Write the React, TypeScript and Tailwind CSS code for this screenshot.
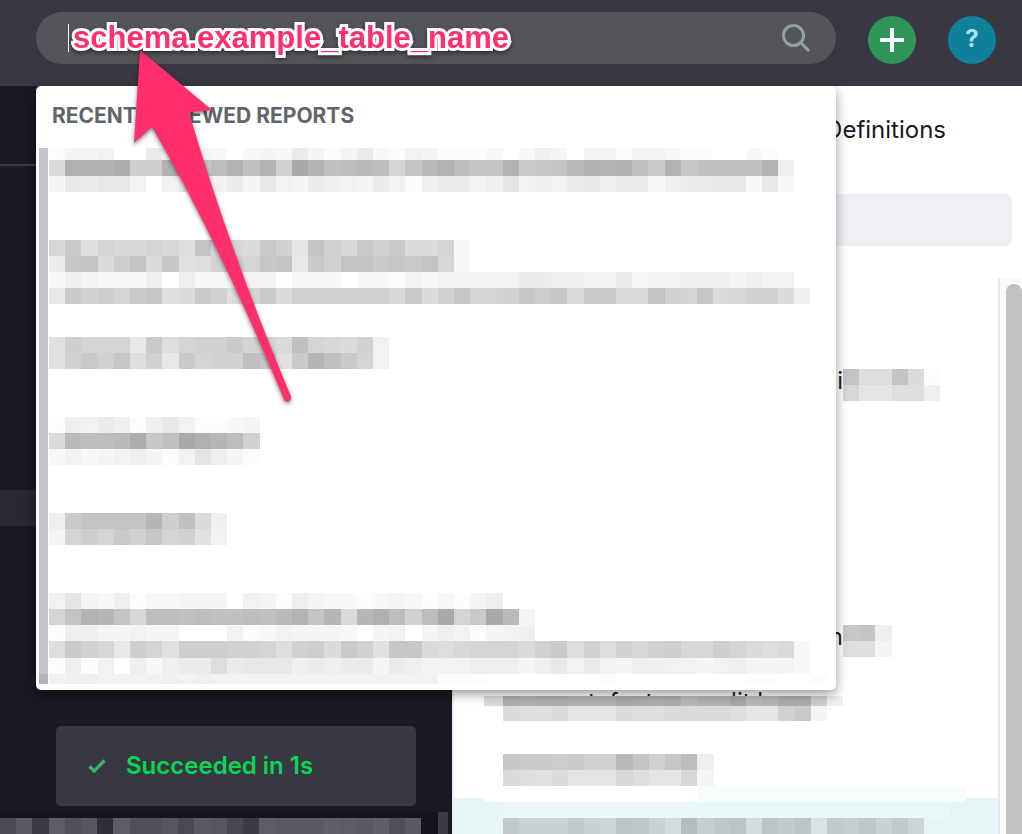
type Tone = "light" | "cyan" | "dark";
type MosaicRow = { y: number; h?: number; cells: string };

// one letter per cell, a = faintest ... z = strongest, "." = empty
const shade = (letter: string, tone: Tone) => {
  const level = letter.charCodeAt(0) - 96;
  if (tone === "dark") {
    const v = 24 + level * 3;
    return `rgb(${v}, ${v - 1}, ${v + 9})`;
  }
  const v = Math.round(255 - level * 3.3);
  if (tone === "cyan") {
    return `rgb(${v - 7}, ${v}, ${v + 1})`;
  }
  return level > 7 ? `rgb(${v}, ${v}, ${v + 2})` : `rgb(${v}, ${v}, ${v})`;
};

const Mosaic = ({ rows, left = 0, tone = "light" }: { rows: MosaicRow[]; left?: number; tone?: Tone }) => (
  <g shapeRendering="crispEdges">
    {rows.map((row) =>
      row.cells.split("").map((cell, i) => {
        if (cell === ".") return null;
        const x = left + Math.round((i * 81) / 5);
        const next = left + Math.round(((i + 1) * 81) / 5);
        return (
          <rect key={`${row.y}-${i}`} x={x} y={row.y} width={next - x} height={row.h ?? 16} fill={shade(cell, tone)} />
        );
      })
    )}
  </g>
);

const reportRows: MosaicRow[] = [
  { y: 0, h: 12, cells: "accd..fcdcb.bcbfcacfbadcaaab.bec.ddacdbaa..ba" },
  { y: 12, cells: "kxxxyoowxqtwswnzwstutmruwtrrwpqruxvxspwqsssswe" },
  { y: 28, cells: "cgfggd.dfedfcgdcfedcfdaeffdehdedfgeffbeffggbgb" },
  { y: 92, cells: "lpjmllmljrllkpnhrnlpnpkkmb" },
  { y: 108, cells: "fqrkorkqijmomqrgpnrrpqprlb" },
  { y: 124, cells: "becbbbe.ebbccc.bbb.bbacbdddddffeeddfbddeeecedd" },
  { y: 140, cells: "gpnompqjkpnjmpknnnnnnlpknqmmnqoqkppkkrnmqklnnke" },
  { y: 189, cells: "iommmgpjmnnpmmksmlknd" },
  { y: 205, cells: "inpnqjngpmnnsqipvspmd" },
  { y: 269, cells: "aedfeaegdaabc" },
  { y: 285, cells: "kuttuyqszxvtn" },
  { y: 301, cells: "bdbcdecadheca" },
  { y: 365, cells: "eprrrrvoske" },
  { y: 381, cells: "cmompnqmnid" },
  { y: 445, cells: "dhcbeabbccc.dcaecbbabcbabace" },
  { y: 461, cells: "mrwvrlttstsstsuwrvkvxtntzmpzuc" },
  { y: 477, cells: "aeeccdcc...da bdcccb.cd.cedacde".replace(" ", "") },
  { y: 493, h: 17, cells: "jpnlgomiooonnmjnokpniqqkjlmmmknpjnjnlnollomkjkb" },
  { y: 510, cells: "aead.ebeffjfgggefeffcfedddeeecegdfdceeddcdecccb" },
  { y: 526, h: 10, cells: "deeddddededdddddddddddddaaa.......a........aa..a" },
];

const statusRows: MosaicRow[] = [{ y: 6, cells: "qvlwsuhwssuqvuplwvvvxwvxsv" }];

const listRow1: MosaicRow[] = [
  { y: 0, cells: "rjjrka" },
  { y: 16, cells: "lhhjje" },
];
const listRow2: MosaicRow[] = [
  { y: 0, cells: "qre" },
  { y: 16, cells: "jjc" },
];
const listRow3: MosaicRow[] = [
  { y: 0, h: 10, cells: "xwxxwwwzyxyuwwzuvyyoe" },
  { y: 10, h: 15, cells: "kjjkhhhkjjkkkkjhhnpc" },
];
const listRow4: MosaicRow[] = [
  { y: 0, cells: "qppopnnurnqte" },
  { y: 16, cells: "kjikhhhljhhlc" },
];
const listRow5: MosaicRow[] = [{ y: 0, cells: "pnnnpnmrqnktoqrkrpripoqnpm" }];

const SearchIcon = () => (
  <svg viewBox="0 0 28 28" className="size-7" fill="none" stroke="#93a1a1" strokeWidth="3">
    <circle cx="11.500" cy="11.500" r="10" />
    <path d="M18.500 18.500 27 27" />
  </svg>
);

const PlusIcon = () => (
  <svg viewBox="0 0 24 24" className="size-6" stroke="white" strokeWidth="4">
    <path d="M12 0v24M0 12h24" />
  </svg>
);

const CheckIcon = () => (
  <svg viewBox="0 0 18 14" className="h-3.5 w-[18px]" fill="none" stroke="#3bb068" strokeWidth="3.400">
    <path d="M1.500 7.500 6.200 12 16.500 1.500" />
  </svg>
);

const RecentReports = () => (
  <section className="absolute inset-x-0 top-[74px] z-10 overflow-hidden rounded-[5px] bg-white pb-1.5 shadow-[0_4px_12px_rgba(0,0,0,0.4)]">
    <h2 className="flex h-[62px] items-center px-4 pb-0.5 text-[21px] font-bold text-[#62646c]">
      RECENTLY VIEWED REPORTS
    </h2>
    <svg className="block h-[536px] w-[800px]" aria-hidden="true">
      <rect x="3" y="0" width="9" height="536" fill="#c4c4c8" />
      <rect x="3" y="526" width="9" height="10" fill="#b4b4b9" />
      <Mosaic rows={reportRows} left={13} />
    </svg>
  </section>
);

const Header = () => (
  <header className="relative flex h-[86px] shrink-0 items-start gap-8 bg-[#393842] pt-3 pr-[26px] pl-9">
    <div className="relative flex-1">
      <div className="flex h-[52px] items-center rounded-full bg-[#54545b] pr-[26px] pl-8">
        <span className="h-7 w-px bg-white" />
        <input type="text" aria-label="Search" className="h-full min-w-0 flex-1 bg-transparent text-2xl text-white outline-none" />
        <button aria-label="Run search">
          <SearchIcon />
        </button>
      </div>
      <RecentReports />
    </div>
    <button aria-label="New" className="mt-1 flex size-12 items-center justify-center rounded-full bg-[#2e9458]">
      <PlusIcon />
    </button>
    <button className="mt-1 size-12 rounded-full bg-[#107f98] pb-0.5 text-2xl font-bold text-[#a6e1ef]">?</button>
  </header>
);

const Sidebar = () => (
  <aside className="flex w-[452px] shrink-0 flex-col bg-[#191823]">
    <div className="h-20 border-b-2 border-[#393842]" />
    <div className="mt-[324px] h-9 bg-[#292833]" />
    <div className="mt-[200px] mr-9 ml-14 flex h-20 items-center gap-5 rounded-[5px] bg-[#393842] pl-8">
      <CheckIcon />
      <span className="text-2xl font-semibold text-[#06d755]">Succeeded in 1s</span>
    </div>
    <svg className="mt-1.5 h-[22px] w-full" aria-hidden="true">
      <rect x="0" y="0" width="438" height="22" fill="#14131e" />
      <rect x="438" y="0" width="10" height="22" fill="#3d3c46" />
      <Mosaic rows={statusRows} tone="dark" />
    </svg>
  </aside>
);

const ListItem = ({ label, rows }: { label: string; rows: MosaicRow[] }) => (
  <li className="flex h-8 items-center">
    <span className="w-[389px] pb-2 text-right text-2xl text-[#222]">{label}</span>
    <svg className="h-8 flex-1" aria-hidden="true">
      <Mosaic rows={rows} />
    </svg>
  </li>
);

const Panel = () => (
  <main className="flex min-w-0 flex-1 flex-col border-l-2 border-[#eeeeef] bg-white">
    <div className="flex h-[108px] items-start justify-end pt-7 pr-[76px]">
      <a href="#definitions" className="text-2xl text-[#191823]">Definitions</a>
    </div>
    <input type="text" aria-label="Filter" className="mr-2.5 ml-7 h-[52px] rounded-[5px] bg-[#eff0f5] px-4" />
    <div className="mt-8 flex min-h-0 flex-1">
      <ul className="flex min-w-0 flex-1 flex-col gap-[224px] overflow-hidden pt-[91px]">
        <ListItem label="i" rows={listRow1} />
        <ListItem label="n" rows={listRow2} />
        <li className="-mt-[195px] shrink-0">
          <p className="h-2.5 overflow-hidden pl-[134px] text-2xl leading-8 text-[#222]">t, feature, split b</p>
          <svg className="block h-[58px] w-full" aria-hidden="true">
            <rect x="30" y="0" width="19" height="10" fill="#dcdcdc" />
            <Mosaic rows={listRow3} left={49} />
          </svg>
          <svg className="block h-11 w-full" aria-hidden="true">
            <Mosaic rows={listRow4} left={49} />
            <rect x="244" y="32" width="268" height="12" fill="#f7fcfd" />
          </svg>
          <svg className="block h-9 w-full bg-[#e8f5f7]" aria-hidden="true">
            <rect x="30" y="0" width="214" height="4" fill="#fdfefe" />
            <rect x="244" y="0" width="268" height="4" fill="#f7fcfd" />
            <rect x="49" y="4" width="447" height="16" fill="#ebf8fa" />
            <g transform="translate(0 20)">
              <Mosaic rows={listRow5} left={49} tone="cyan" />
            </g>
          </svg>
        </li>
      </ul>
      <div className="w-6 border-l-2 border-[#e7e7e7] bg-[#fafafa] pt-1.5 pl-1.5">
        <div className="h-full rounded-t-full bg-[#c1c1c1]" />
      </div>
    </div>
  </main>
);

// pink label and arrow on top of everything
const Annotation = () => (
  <div className="pointer-events-none absolute top-0 left-0 z-20">
    <svg width="320" height="420" className="block drop-shadow-[0_2px_2px_rgba(0,0,0,0.5)]" aria-hidden="true">
      <path
        d="M140 50 212 110 189 112.500Q228 246 291 396.500A4 4 0 0 1 284.500 400.500Q217 238 152 127L134 143Z"
        fill="#ff2f6d"
      />
    </svg>
    <p className="absolute top-5 left-[73px] font-['Liberation_Sans',sans-serif] text-[31px] leading-9 font-bold whitespace-nowrap text-[#ff2f6d] drop-shadow-[0_2px_2px_rgba(0,0,0,0.5)] [-webkit-text-stroke:6px_white] [paint-order:stroke_fill]">
      schema.example_table_name
    </p>
  </div>
);

export default function App() {
  return (
    <div className="relative flex h-screen flex-col overflow-hidden bg-white font-['Inter',sans-serif]">
      <Header />
      <div className="flex min-h-0 flex-1">
        <Sidebar />
        <Panel />
      </div>
      <Annotation />
    </div>
  );
}
